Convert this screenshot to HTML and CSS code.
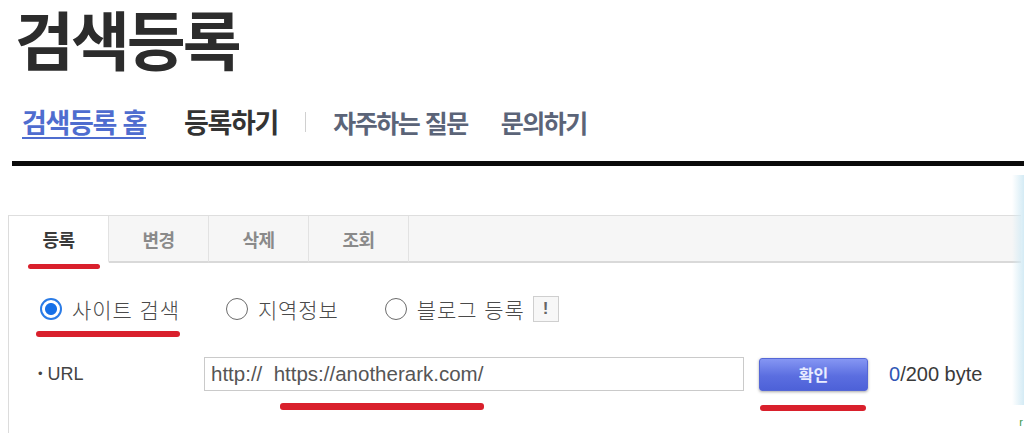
FILE: index.html
```html
<!DOCTYPE html>
<html lang="ko">
<head>
<meta charset="utf-8">
<title>검색등록</title>
<link rel="stylesheet" href="styles.css">
</head>
<body>
<header class="page-head">
  <h1 class="title">검색등록</h1>
  <nav class="gnb">
    <a class="gnb-item gnb-home" href="#">검색등록 홈</a>
    <a class="gnb-item gnb-current" href="#">등록하기</a>
    <span class="gnb-sep"></span>
    <a class="gnb-item gnb-sub" href="#">자주하는 질문</a>
    <a class="gnb-item gnb-sub" href="#">문의하기</a>
  </nav>
  <div class="rule"></div>
</header>

<section class="panel">
  <ul class="tabs">
    <li class="tab tab-on mark-tab">등록</li>
    <li class="tab">변경</li>
    <li class="tab">삭제</li>
    <li class="tab">조회</li>
    <li class="tab-rest"></li>
  </ul>

  <div class="types">
    <label class="type mark-type"><span class="radio radio-on"></span><span class="type-text">사이트 검색</span></label>
    <label class="type"><span class="radio"></span><span class="type-text">지역정보</span></label>
    <label class="type"><span class="radio"></span><span class="type-text">블로그 등록</span><span class="info">!</span></label>
  </div>

  <div class="url-row">
    <span class="url-label"><span class="bullet">•</span>URL</span>
    <span class="field mark-field"><span class="field-input">http://&nbsp; https://anotherark.com/</span></span>
    <button class="btn mark-btn" type="button">확인</button>
    <span class="bytes"><em class="bytes-now">0</em>/200 byte</span>
  </div>
</section>

<div class="edge"></div>
<span class="corner">r</span>
</body>
</html>
```

FILE: styles.css
```css
html, body {
  margin: 0;
  padding: 0;
  background: #fff;
  overflow: hidden;
}
body {
  width: 1024px;
  height: 433px;
  position: relative;
  font-family: "Noto Sans CJK KR", "Noto Sans", sans-serif;
  color: #333;
}

/* header */
.page-head {
  padding-top: 1px;
}
.title {
  margin: 0;
  padding-left: 15px;
  font-size: 64px;
  line-height: 72px;
  font-weight: 700;
  color: #2c2c2c;
  letter-spacing: -3px;
}
.gnb {
  margin-top: 31px;
  padding-left: 22px;
  height: 36px;
  display: flex;
  align-items: center;
}
.gnb-item {
  font-size: 27px;
  line-height: 36px;
  font-weight: 700;
  letter-spacing: -1.3px;
  text-decoration: none;
  white-space: nowrap;
}
.gnb-home {
  color: #4f6dcf;
  text-decoration: underline;
  text-decoration-thickness: 2px;
  text-underline-offset: 4px;
  margin-right: 38px;
}
.gnb-current {
  color: #333;
}
.gnb-sep {
  width: 1px;
  height: 20px;
  background: #d0d0d0;
  margin: 0 27px 0 27px;
}
.gnb-sub {
  color: #5b6478;
  font-size: 25px;
  letter-spacing: -1.5px;
  margin-right: 33px;
}
.rule {
  margin: 21px 0 0 12px;
  height: 5px;
  background: #0a0a0a;
}

/* panel */
.panel {
  margin: 49px 0 0 8px;
  width: 1012px;
  height: 220px;
  border-top: 1px solid #dedede;
  border-left: 1px solid #dcdcdc;
}
.tabs {
  list-style: none;
  margin: 0;
  padding: 0;
  display: flex;
  height: 47px;
}
.tab {
  position: relative;
  width: 99px;
  border-right: 1px solid #e2e2e2;
  border-bottom: 2px solid #d9d9d9;
  background: #f6f6f6;
  display: flex;
  align-items: center;
  justify-content: center;
  font-size: 18px;
  font-weight: 700;
  letter-spacing: -0.5px;
  color: #8a8a8a;
}
.tab-on {
  background: #fff;
  border-bottom-color: #fff;
  color: #3a3a3a;
}
.tab-rest {
  flex: 1;
  background: #f6f6f6;
  border-bottom: 2px solid #d9d9d9;
}

.types {
  margin-top: 26px;
  padding-left: 31px;
  height: 40px;
  display: flex;
  align-items: center;
}
.type {
  position: relative;
  display: flex;
  align-items: center;
  height: 24px;
  margin-right: 46px;
}
.radio {
  box-sizing: border-box;
  width: 22px;
  height: 22px;
  border: 1.5px solid #6b6b6b;
  border-radius: 50%;
  background: #fff;
  margin-right: 10px;
}
.radio-on {
  border: 2px solid #2a7be6;
  background: radial-gradient(circle, #1670e8 0 5.5px, #fff 6.5px);
}
.type-text {
  font-size: 21px;
  line-height: 24px;
  font-weight: 300;
  color: #4a4a4a;
  letter-spacing: 0.9px;
}
.info {
  box-sizing: border-box;
  width: 26px;
  height: 26px;
  margin-left: 8px;
  border: 1px solid #cfcfcf;
  background: #f7f7f7;
  display: flex;
  align-items: center;
  justify-content: center;
  font-family: "Liberation Sans", sans-serif;
  font-weight: 700;
  font-size: 17px;
  color: #666;
}

.url-row {
  margin-top: 26px;
  padding-left: 29px;
  height: 38px;
  display: flex;
  align-items: center;
}
.url-label {
  width: 166px;
  font-family: "Liberation Sans", sans-serif;
  font-size: 18px;
  color: #444;
}
.bullet {
  font-size: 13px;
  margin-right: 5px;
  vertical-align: 2px;
}
.field {
  position: relative;
  box-sizing: border-box;
  width: 540px;
  height: 34px;
  border: 1.5px solid #cacaca;
  background: #fff;
  display: flex;
  align-items: center;
  padding-left: 6px;
}
.field-input {
  font-family: "Liberation Sans", sans-serif;
  font-size: 20.5px;
  color: #555;
  white-space: nowrap;
}
.btn {
  position: relative;
  box-sizing: border-box;
  width: 109px;
  height: 33px;
  margin: 0 21px 0 15px;
  border: 1px solid #5567d6;
  border-radius: 3px;
  background: linear-gradient(#8596f3, #5b6ee0 55%, #4d61d8);
  box-shadow: 0 1px 3px rgba(0, 0, 0, 0.35);
  color: #e9edff;
  font-family: "Noto Sans CJK KR", sans-serif;
  font-size: 16px;
  font-weight: 700;
  padding: 0;
}
.bytes {
  font-family: "Liberation Sans", sans-serif;
  font-size: 20px;
  color: #3a3a3a;
}
.bytes-now {
  font-style: normal;
  color: #2f55b5;
}

/* red annotation marks */
.mark-tab::after,
.mark-type::after,
.mark-field::after,
.mark-btn::after {
  content: "";
  position: absolute;
  background: #d9202c;
  border-radius: 3px;
}
.mark-tab::after {
  left: 19px;
  top: 48px;
  width: 72px;
  height: 5px;
}
.mark-type::after {
  left: -4px;
  top: 34px;
  width: 144px;
  height: 6px;
}
.mark-field::after {
  left: 75px;
  top: 45px;
  width: 204px;
  height: 7px;
}
.mark-btn::after {
  left: 0;
  top: 46px;
  width: 106px;
  height: 6px;
}

/* decorative page edge */
.edge {
  position: absolute;
  right: 0;
  top: 175px;
  width: 12px;
  height: 230px;
  background: linear-gradient(to right, rgba(214, 236, 246, 0), #d4ebf5);
}
.corner {
  position: absolute;
  right: 1px;
  top: 416px;
  font-family: "Liberation Sans", sans-serif;
  font-size: 11px;
  color: #3a9a4a;
}
```
